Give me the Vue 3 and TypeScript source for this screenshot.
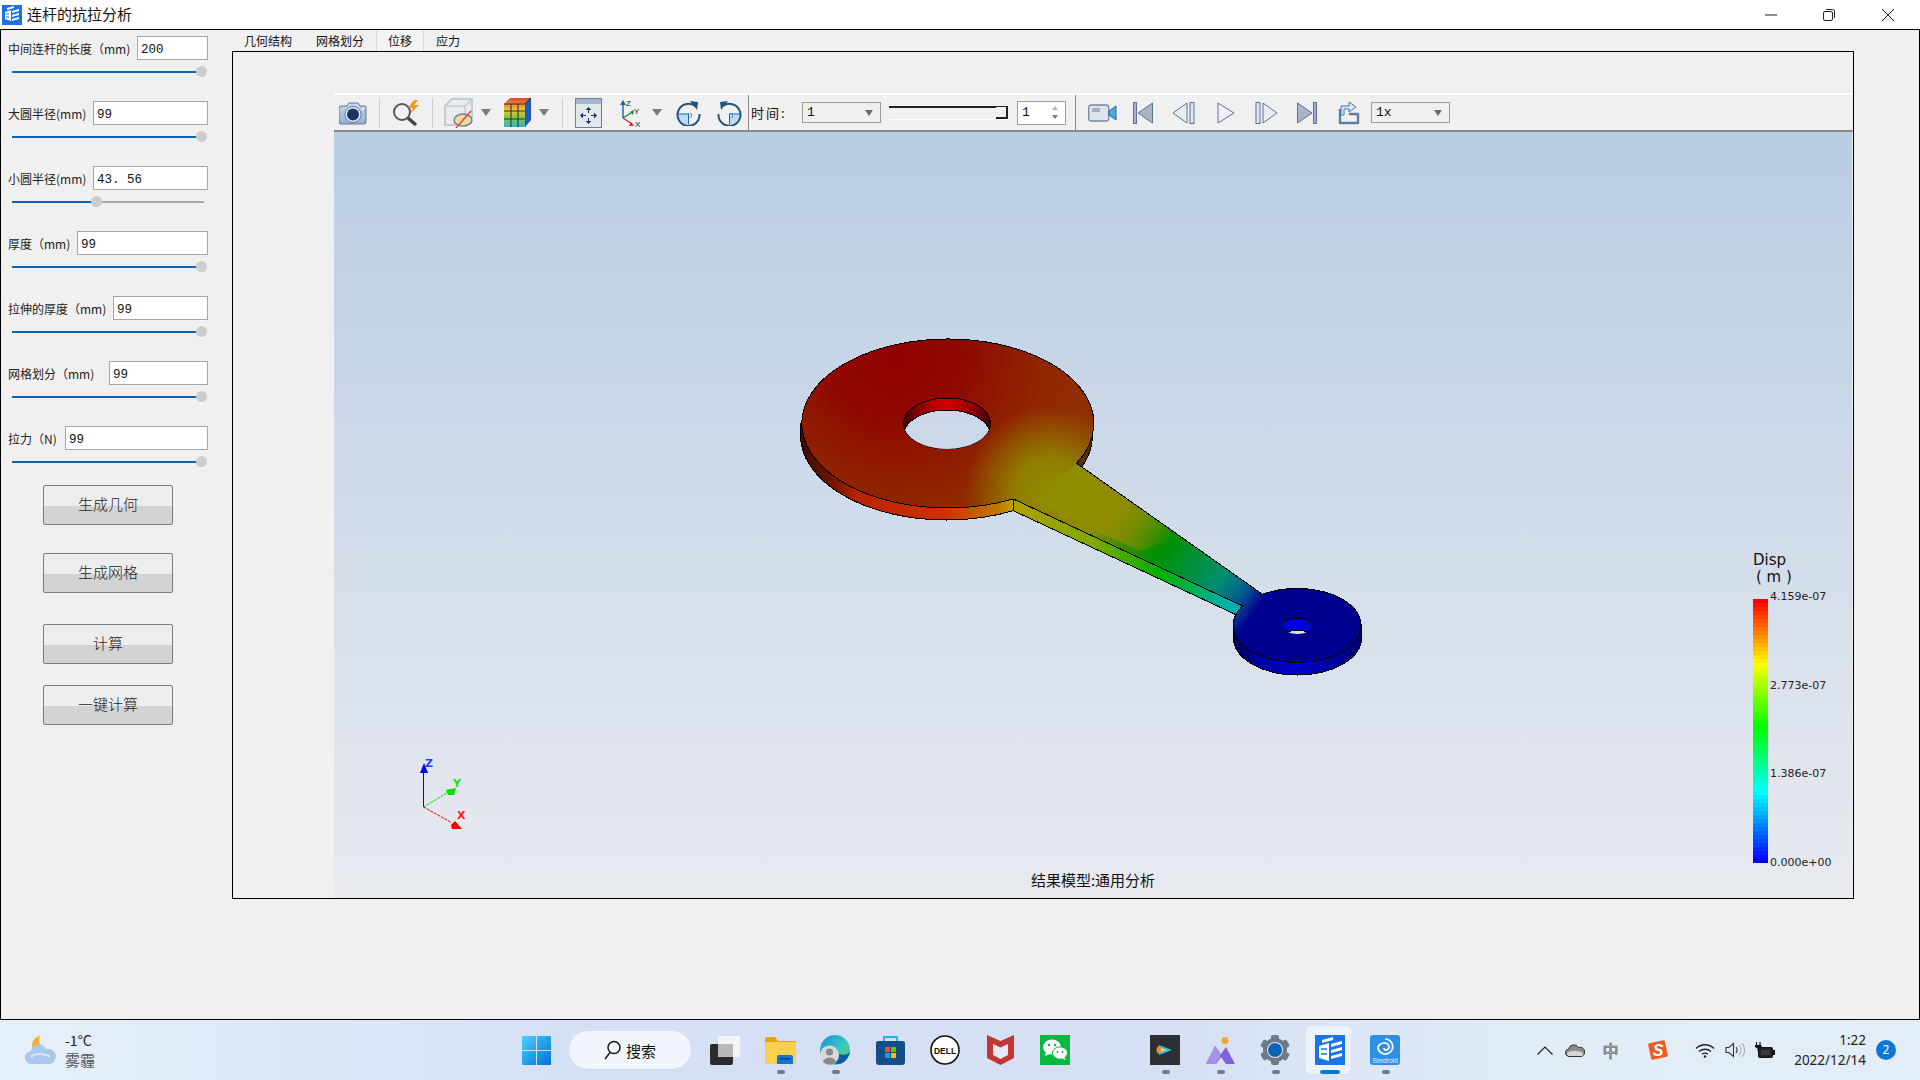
<script setup lang="ts">
interface Param {
  label: string;
  value: string;
  inputWidth: number;
  percent: number;
}

const params: Param[] = [
  { label: "中间连杆的长度（mm)", value: "200", inputWidth: 71, percent: 98.5 },
  { label: "大圆半径(mm)", value: "99", inputWidth: 115, percent: 98.5 },
  { label: "小圆半径(mm)", value: "43. 56", inputWidth: 115, percent: 44 },
  { label: "厚度（mm)", value: "99", inputWidth: 131, percent: 98.5 },
  { label: "拉伸的厚度（mm)", value: "99", inputWidth: 95, percent: 98.5 },
  { label: "网格划分（mm)", value: "99", inputWidth: 99, percent: 98.5 },
  { label: "拉力（N)", value: "99", inputWidth: 143, percent: 98.5 },
];

const buttons = [
  { text: "生成几何", top: 17 },
  { text: "生成网格", top: 28 },
  { text: "计算", top: 31 },
  { text: "一键计算", top: 21 },
];

const tabs = ["几何结构", "网格划分", "位移", "应力"];
const legendLabels = ["4.159e-07", "2.773e-07", "1.386e-07", "0.000e+00"];

// colour bar runs red -> yellow -> green -> cyan -> blue, in steps
const stops: [number, number[]][] = [
  [0, [255, 0, 0]],
  [0.242, [255, 255, 0]],
  [0.485, [0, 255, 0]],
  [0.735, [0, 255, 255]],
  [1, [0, 0, 255]],
];

function bandColor(t: number): string {
  let i = 0;
  while (i < stops.length - 2 && t > stops[i + 1][0]) i++;
  const [t0, c0] = stops[i];
  const [t1, c1] = stops[i + 1];
  const k = (t - t0) / (t1 - t0);
  const c = c0.map((v, n) => Math.round(v + (c1[n] - v) * k));
  return `rgb(${c[0]},${c[1]},${c[2]})`;
}

const bands = Array.from({ length: 66 }, (_, i) => bandColor(i / 65));
const surfacePath =
  "M1076.6 463.3L1262.4 594.3A64 37 0 1 1 1242.6 606L1013.3 499A146 84.5 0 1 1 1076.6 463.3z";
</script>

<template>
  <div class="screen">
    <header class="titlebar">
      <svg class="app-icon" width="20" height="20" viewBox="0 0 20 20">
        <rect width="20" height="20" fill="#1a73e8" />
        <path d="M3 7l6-2v11l-6-2zM10 6l7-2v2l-7 2zM10 10l7-2v2l-7 2zM10 14l7-2v2l-7 2zM5 3l7-2v2l-7 2z" fill="#fff" />
        <path d="M4 9h3M4 12h3" stroke="#1a73e8" />
      </svg>
      <span class="title">连杆的抗拉分析</span>
      <div class="win-controls">
        <svg width="14" height="14" viewBox="0 0 14 14"><path d="M1 7h12" stroke="#222" /></svg>
        <svg class="restore" width="14" height="14" viewBox="0 0 14 14" fill="none" stroke="#222">
          <rect x="1.5" y="3.5" width="9" height="9" rx="1.5" />
          <path d="M4 1.5h6.5a2 2 0 0 1 2 2V10" />
        </svg>
        <svg class="close" width="14" height="14" viewBox="0 0 14 14"><path d="M1 1l12 12M13 1L1 13" stroke="#222" /></svg>
      </div>
    </header>

    <main class="window">
      <aside class="sidebar">
        <div class="params">
          <div v-for="p in params" :key="p.label" class="param">
            <div class="param-row">
              <label>{{ p.label }}</label>
              <input type="text" readonly :value="p.value" :style="{ width: p.inputWidth + 'px' }" />
            </div>
            <div class="slider">
              <div class="slider-fill" :style="{ width: p.percent + '%' }"></div>
              <div class="slider-thumb" :style="{ left: p.percent + '%' }"></div>
            </div>
          </div>
        </div>
        <button v-for="b in buttons" :key="b.text" class="action" :style="{ marginTop: b.top + 'px' }">
          {{ b.text }}
        </button>
      </aside>

      <section class="content">
        <nav class="tabs">
          <span v-for="t in tabs" :key="t" class="tab" :class="{ active: t === '位移' }">{{ t }}</span>
        </nav>
        <div class="panel">
          <div class="toolbar">
            <svg class="i-camera" width="28" height="24" viewBox="0 0 28 24">
              <defs>
                <linearGradient id="camBody" x1="0" y1="0" x2="0" y2="1">
                  <stop offset="0" stop-color="#c6d8ec" /><stop offset="1" stop-color="#8fb0d2" />
                </linearGradient>
              </defs>
              <path d="M2 5h6l2-3h9l2 3h5a1 1 0 0 1 1 1v15a2 2 0 0 1-2 2H2a2 2 0 0 1-2-2V7a2 2 0 0 1 2-2z" fill="url(#camBody)" stroke="#64799a" />
              <circle cx="14" cy="13.5" r="8" fill="#e6edf5" stroke="#64799a" />
              <circle cx="14" cy="13.5" r="6" fill="#1c3466" />
              <circle cx="24" cy="8" r="1" fill="#fff" />
            </svg>
            <i class="sep s-a"></i>
            <svg class="i-lens" width="29" height="28" viewBox="0 0 29 28" fill="none">
              <circle cx="10" cy="13" r="8" stroke="#555" stroke-width="2" fill="#eef2f6" />
              <path d="M16 19l8 7" stroke="#444" stroke-width="3.5" />
              <path d="M22 1l-6 8h5l-3 6 9-9h-5l4-5z" fill="#f19a22" />
            </svg>
            <i class="sep s-b"></i>
            <svg class="i-cube" width="29" height="30" viewBox="0 0 29 30" fill="none">
              <path d="M1 8l7-7h20v19l-7 7H1z" fill="#e9ecef" stroke="#b8bfc9" stroke-width="1.5" />
              <path d="M1 8h20v19M21 8l7-7" stroke="#c5cbd3" stroke-width="1.5" />
              <ellipse cx="19" cy="22" rx="9" ry="6" fill="#f0d9a4" stroke="#6d7f99" stroke-width="1.5" />
              <path d="M12 30l15-17" stroke="#d9442c" stroke-width="1.3" />
            </svg>
            <svg class="drop d-a" width="10" height="7" viewBox="0 0 10 7"><path d="M0 0h10L5 7z" fill="#7c7c7c" /></svg>
            <svg class="i-grid" width="27" height="30" viewBox="0 0 27 30">
              <defs>
                <linearGradient id="gridFace" x1="0" y1="0" x2="0" y2="1">
                  <stop offset="0" stop-color="#e2462b" /><stop offset=".4" stop-color="#f2c32c" /><stop offset=".7" stop-color="#7ac943" /><stop offset="1" stop-color="#2fb5c9" />
                </linearGradient>
              </defs>
              <path d="M0 6l6-6h21v22l-6 7H0z" fill="url(#gridFace)" />
              <path d="M21 7l6-7v22l-6 7z" fill="#1d58c4" />
              <path d="M0 6h21l6-6M7 6v23M14 6v23M0 13h21M0 21h21" stroke="#2a3350" stroke-width="1.1" fill="none" />
            </svg>
            <svg class="drop d-b" width="10" height="7" viewBox="0 0 10 7"><path d="M0 0h10L5 7z" fill="#7c7c7c" /></svg>
            <i class="sep s-c"></i>
            <svg class="i-fit" width="27" height="30" viewBox="0 0 27 30">
              <rect x=".5" y=".5" width="26" height="29" fill="#e3e8ef" stroke="#6d7f99" />
              <rect x="1" y="1" width="25" height="5" fill="#a9b8cb" />
              <g fill="#1f3a5f" stroke="#1f3a5f">
                <path d="M13.5 9l3 3h-6zM13.5 26l3-3h-6zM5 17.5l3-3v6zM22 17.5l-3-3v6z" stroke="none" />
                <path d="M13.5 12v3M13.5 20v3M8 17.5h3M16 17.5h3" fill="none" />
              </g>
            </svg>
            <svg class="i-axis" width="23" height="30" viewBox="0 0 23 30">
              <path d="M4 20V6" stroke="#1761b5" stroke-width="1.4" />
              <path d="M4 2l3 5H1z" fill="#1761b5" />
              <path d="M4 20l8-5" stroke="#138a3a" stroke-width="1.4" />
              <path d="M15 12l-1 5-3-3z" fill="#138a3a" />
              <path d="M4 20l9 6" stroke="#d9232c" stroke-width="1.4" />
              <path d="M15 28l-5 0 2-4z" fill="#d9232c" />
              <text x="7" y="8" class="axis-text">Z</text>
              <text x="15" y="16" class="axis-text">Y</text>
              <text x="16" y="29" class="axis-text">X</text>
            </svg>
            <svg class="drop d-c" width="10" height="7" viewBox="0 0 10 7"><path d="M0 0h10L5 7z" fill="#7c7c7c" /></svg>
            <svg class="i-rot" width="25" height="26" viewBox="0 0 25 26" fill="none">
              <path d="M2 14h10.5v10.5A11 11 0 0 1 2 14z" fill="#b9dcf2" />
              <rect x="12.5" y="14" width="3" height="3" fill="#fff" stroke="#1c6aa8" stroke-width=".7" />
              <path d="M2 14h10.5v10.5" stroke="#1c6aa8" />
              <path d="M19 6A11 11 0 1 0 23.5 14" stroke="#23547f" stroke-width="2" />
              <path d="M14 1l8 1-1 8z" fill="#23547f" />
            </svg>
            <svg class="i-rot2" width="25" height="26" viewBox="0 0 25 26" fill="none">
              <path d="M23 14H12.5v10.5A11 11 0 0 0 23 14z" fill="#b9dcf2" />
              <rect x="12.5" y="14" width="3" height="3" fill="#fff" stroke="#1c6aa8" stroke-width=".7" />
              <path d="M23 14H12.5v10.5" stroke="#1c6aa8" />
              <path d="M6 6A11 11 0 1 1 1.5 14" stroke="#23547f" stroke-width="2" />
              <path d="M11 1L3 2l1 8z" fill="#23547f" />
            </svg>
            <i class="sep-tall st-a"></i>
            <span class="time-label">时间:</span>
            <div class="combo c-time"><span>1</span><svg width="8" height="6" viewBox="0 0 8 6"><path d="M0 0h8L4 6z" fill="#6a6a6a" /></svg></div>
            <div class="time-slider"><div class="time-handle"></div></div>
            <div class="spin">
              <span>1</span>
              <svg width="6" height="14" viewBox="0 0 6 14"><path d="M3 0l3 4H0z" fill="#b5b5b5" /><path d="M0 9h6l-3 4z" fill="#7a7a7a" /></svg>
            </div>
            <i class="sep-tall st-b"></i>
            <svg class="i-video" width="29" height="18" viewBox="0 0 29 18">
              <rect x=".7" y="1" width="20" height="16" rx="2.5" fill="#dfe4ec" stroke="#7187a8" stroke-width="1.3" />
              <rect x="4" y="4" width="8" height="4" fill="#a6b0c0" />
              <path d="M21 7l7-5v14l-7-5z" fill="#5aa5d8" stroke="#1a6aa8" />
            </svg>
            <svg class="i-first" width="20" height="22" viewBox="0 0 20 22">
              <rect x=".5" y=".5" width="3" height="21" fill="#a4b3c9" stroke="#5b7295" />
              <path d="M19.5 1v20L5 11z" fill="#a9b4c4" stroke="#5b7295" />
            </svg>
            <svg class="i-prev" width="23" height="22" viewBox="0 0 23 22">
              <path d="M15 1v20L1 11z" fill="#e8edf3" stroke="#5b7295" />
              <rect x="18" y=".5" width="4" height="21" fill="#dfe5ed" stroke="#5b7295" />
            </svg>
            <svg class="i-play" width="18" height="22" viewBox="0 0 18 22"><path d="M1 1l16 10L1 21z" fill="#edf1f6" stroke="#5b7295" /></svg>
            <svg class="i-next" width="23" height="22" viewBox="0 0 23 22">
              <rect x="1" y=".5" width="4" height="21" fill="#dfe5ed" stroke="#5b7295" />
              <path d="M8 1v20l14-10z" fill="#e8edf3" stroke="#5b7295" />
            </svg>
            <svg class="i-last" width="20" height="22" viewBox="0 0 20 22">
              <path d="M.5 1v20L15 11z" fill="#a9b4c4" stroke="#5b7295" />
              <rect x="16.5" y=".5" width="3" height="21" fill="#a4b3c9" stroke="#5b7295" />
            </svg>
            <svg class="i-export" width="23" height="24" viewBox="0 0 23 24" fill="none">
              <path d="M3 8v14h18V13h-9" stroke="#5f7da6" stroke-width="2.4" stroke-linejoin="round" />
              <path d="M12 1l7 5-7 5V8H7v6H4V5h8z" fill="#dbe7f3" stroke="#3c78b5" />
            </svg>
            <div class="combo c-speed"><span>1x</span><svg width="8" height="6" viewBox="0 0 8 6"><path d="M0 0h8L4 6z" fill="#6a6a6a" /></svg></div>
          </div>

          <div class="viewport">
            <svg class="scene" viewBox="334 132 1518 766">
              <defs>
                <linearGradient id="bg" gradientUnits="userSpaceOnUse" x1="0" y1="132" x2="0" y2="898">
                  <stop offset="0" stop-color="#b9cde4" /><stop offset="1" stop-color="#e8eaef" />
                </linearGradient>
                <radialGradient id="surface" gradientUnits="userSpaceOnUse" cx="895" cy="355" r="500">
                  <stop offset="0" stop-color="#8f0000" />
                  <stop offset=".14" stop-color="#8f0a00" />
                  <stop offset=".3" stop-color="#902800" />
                  <stop offset=".44" stop-color="#903200" />
                  <stop offset=".5" stop-color="#908c00" />
                  <stop offset=".66" stop-color="#009000" />
                  <stop offset=".79" stop-color="#009070" />
                  <stop offset=".84" stop-color="#006090" />
                  <stop offset=".885" stop-color="#000090" />
                </radialGradient>
                <radialGradient id="armBlob" gradientUnits="userSpaceOnUse" cx="1050" cy="492" r="85">
                  <stop offset="0" stop-color="#908c00" />
                  <stop offset=".4" stop-color="#908c00" stop-opacity=".85" />
                  <stop offset="1" stop-color="#908c00" stop-opacity="0" />
                </radialGradient>
                <linearGradient id="armStart" gradientUnits="userSpaceOnUse" x1="1060" y1="480" x2="1170" y2="550">
                  <stop offset="0" stop-color="#908c00" />
                  <stop offset=".5" stop-color="#908c00" />
                  <stop offset="1" stop-color="#908c00" stop-opacity="0" />
                </linearGradient>
                <linearGradient id="bigSide" gradientUnits="userSpaceOnUse" x1="800" y1="0" x2="1092" y2="0">
                  <stop offset="0" stop-color="#3a0c00" />
                  <stop offset=".1" stop-color="#6a1400" />
                  <stop offset=".2" stop-color="#b82400" />
                  <stop offset=".5" stop-color="#d03200" />
                  <stop offset=".68" stop-color="#c07800" />
                  <stop offset=".73" stop-color="#c0a000" />
                  <stop offset=".8" stop-color="#5a3000" />
                  <stop offset="1" stop-color="#5a3000" />
                </linearGradient>
                <linearGradient id="armSide" gradientUnits="userSpaceOnUse" x1="1013" y1="0" x2="1240" y2="0">
                  <stop offset="0" stop-color="#b0a000" />
                  <stop offset=".35" stop-color="#80a800" />
                  <stop offset=".65" stop-color="#00b000" />
                  <stop offset=".95" stop-color="#00b0b0" />
                </linearGradient>
                <linearGradient id="smallSide" gradientUnits="userSpaceOnUse" x1="1233" y1="0" x2="1362" y2="0">
                  <stop offset="0" stop-color="#000050" />
                  <stop offset=".2" stop-color="#0000a0" />
                  <stop offset=".5" stop-color="#0000d0" />
                  <stop offset="1" stop-color="#000070" />
                </linearGradient>
                <linearGradient id="holeWall" gradientUnits="userSpaceOnUse" x1="903" y1="0" x2="991" y2="0">
                  <stop offset="0" stop-color="#3c0000" />
                  <stop offset=".2" stop-color="#900000" />
                  <stop offset=".5" stop-color="#d40000" />
                  <stop offset=".8" stop-color="#900000" />
                  <stop offset="1" stop-color="#3c0000" />
                </linearGradient>
                <clipPath id="bigHoleClip"><ellipse cx="947" cy="423.5" rx="43.5" ry="25.5" /></clipPath>
                <clipPath id="smallHoleClip"><ellipse cx="1297.5" cy="626" rx="14.5" ry="8" /></clipPath>
              </defs>

              <g stroke="#000" stroke-width="1" shape-rendering="crispEdges">
                <path d="M800.5 423.5v12a146 84.5 0 0 0 292 0v-12z" fill="url(#bigSide)" />
                <path d="M1233.5 626v12a64 37 0 0 0 128 0v-12z" fill="url(#smallSide)" />
                <path d="M1013.3 499v11.7L1236.7 615l6-9z" fill="url(#armSide)" />
                <path :d="surfacePath" fill="url(#surface)" />
                <path :d="surfacePath" fill="url(#armBlob)" stroke="none" shape-rendering="auto" />
                <path d="M1030 500L1076.6 463.300L1180 536L1140 551z" fill="url(#armStart)" stroke="none" shape-rendering="auto" />
                <path :d="surfacePath" fill="none" />
                <ellipse cx="947" cy="423.5" rx="43.5" ry="25.5" fill="url(#holeWall)" />
                <ellipse cx="1297.5" cy="626" rx="14.5" ry="8" fill="#0000d4" />
                <g clip-path="url(#bigHoleClip)"><ellipse cx="947" cy="435.5" rx="43.5" ry="25.5" fill="url(#bg)" /></g>
                <g clip-path="url(#smallHoleClip)"><ellipse cx="1297.5" cy="638" rx="14.5" ry="8" fill="url(#bg)" /></g>
              </g>

              <g class="triad">
                <path d="M423.5 807V770" stroke="#0000ff" />
                <path d="M424 763l4 10h-8z" fill="#0000ff" />
                <text x="425" y="767" fill="#2a3cff">Z</text>
                <path d="M423.5 807l25-15" stroke="#00e000" stroke-dasharray="3 1" />
                <path d="M456 788l-2 7-6 0-2-5z" fill="#00e000" />
                <text x="453" y="787" fill="#12e012">Y</text>
                <path d="M423.5 807l27 15" stroke="#f00000" stroke-dasharray="3 1" />
                <path d="M462 829h-10l-1-4 4-4z" fill="#f00000" />
                <text x="457" y="819" fill="#ff2020">X</text>
              </g>
            </svg>

            <div class="legend">
              <div class="legend-title">Disp</div>
              <div class="legend-unit">( m )</div>
              <div class="legend-body">
                <div class="legend-bar">
                  <div v-for="(c, i) in bands" :key="i" class="band" :style="{ background: c }"></div>
                </div>
                <div class="legend-labels">
                  <span v-for="l in legendLabels" :key="l">{{ l }}</span>
                </div>
              </div>
            </div>
            <div class="result-name">结果模型:通用分析</div>
          </div>
        </div>
      </section>
    </main>

    <footer class="taskbar">
      <div class="weather">
        <svg width="32" height="30" viewBox="0 0 32 30">
          <path d="M15 1a9 9 0 0 0-7 13 9 9 0 0 0 10-1 10 10 0 0 1-3-12z" fill="#f5b335" />
          <path d="M7 29a6.5 6.5 0 0 1-1-13 8 8 0 0 1 15-2 7.5 7.5 0 0 1 4 15z" fill="#a9c8ec" />
          <path d="M6 22c4-4 14-4 19 0" stroke="#d8e8f8" stroke-width="2" fill="none" />
        </svg>
        <div class="weather-text">
          <span>-1°C</span>
          <span class="weather-sub">雾霾</span>
        </div>
      </div>

      <div class="center">
        <svg class="start" width="29" height="29" viewBox="0 0 29 29">
          <defs>
            <linearGradient id="winBlue" x1="0" y1="0" x2="1" y2="1">
              <stop offset="0" stop-color="#4ad0fb" /><stop offset="1" stop-color="#0270d4" />
            </linearGradient>
          </defs>
          <path d="M0 1a1 1 0 0 1 1-1h13v14H0zM15 0h13a1 1 0 0 1 1 1v13H15zM0 15h14v14H1a1 1 0 0 1-1-1zM15 15h14v13a1 1 0 0 1-1 1H15z" fill="url(#winBlue)" />
        </svg>
        <div class="search">
          <svg width="17" height="20" viewBox="0 0 17 20" fill="none" stroke="#1a1a1a" stroke-width="1.5">
            <circle cx="10" cy="7.5" r="6" />
            <path d="M6 12.5L1 19" />
          </svg>
          <span>搜索</span>
        </div>

        <div class="slot">
          <svg width="30" height="29" viewBox="0 0 30 29">
            <rect x="0" y="8" width="23" height="21" rx="2" fill="#2b2b2b" />
            <rect x="8" y="0" width="22" height="21" rx="1" fill="#f4f4f4" />
            <rect x="8" y="8" width="15" height="13" fill="#b9b9b9" />
          </svg>
        </div>
        <div class="slot has-dot">
          <svg width="31" height="27" viewBox="0 0 31 27">
            <path d="M0 2a2 2 0 0 1 2-2h8l3 4h18v4H0z" fill="#e2a30c" />
            <rect y="5" width="31" height="22" rx="1" fill="#fbd04c" />
            <path d="M12 20a2 2 0 0 1 2-2h12a2 2 0 0 1 2 2v7H12z" fill="#1078d4" />
            <rect x="15" y="21" width="10" height="1.5" fill="#083e74" />
          </svg>
        </div>
        <div class="slot has-dot">
          <svg width="30" height="30" viewBox="0 0 30 30">
            <defs>
              <linearGradient id="edgeGrad" x1="0" y1="0" x2="1" y2="1">
                <stop offset="0" stop-color="#1d8fd8" /><stop offset=".5" stop-color="#31c5c5" /><stop offset="1" stop-color="#6bd948" />
              </linearGradient>
            </defs>
            <circle cx="15" cy="15" r="15" fill="url(#edgeGrad)" />
            <path d="M30 15c0 4-6 6-11 4-3-1-4-4-2-6H8c-2 6 1 14 9 16 7 1 13-7 13-14z" fill="#0c59a4" />
            <circle cx="9.5" cy="20" r="9.5" fill="#d9d9d9" />
            <circle cx="9.5" cy="17" r="3.6" fill="#8a8a8a" />
            <path d="M3 27c1-6 12-6 13 0a9 9 0 0 1-13 0z" fill="#8a8a8a" />
          </svg>
        </div>
        <div class="slot">
          <svg width="29" height="30" viewBox="0 0 29 30">
            <path d="M8 7V2h13v5" fill="none" stroke="#28b3e8" stroke-width="2" />
            <path d="M2 6h25a2 2 0 0 1 2 2v19a3 3 0 0 1-3 3H3a3 3 0 0 1-3-3V8a2 2 0 0 1 2-2z" fill="#124f88" />
            <rect x="9" y="12" width="5" height="5" fill="#f25022" />
            <rect x="15" y="12" width="5" height="5" fill="#7fba00" />
            <rect x="9" y="18" width="5" height="5" fill="#00a4ef" />
            <rect x="15" y="18" width="5" height="5" fill="#ffb900" />
          </svg>
        </div>
        <div class="slot">
          <svg width="30" height="30" viewBox="0 0 30 30">
            <circle cx="15" cy="15" r="14" fill="#fff" stroke="#111" stroke-width="1.6" />
            <text x="15" y="18.5" class="dell">DELL</text>
          </svg>
        </div>
        <div class="slot">
          <svg width="27" height="30" viewBox="0 0 27 30">
            <path d="M0 0l13.5 6L27 0v23L13.5 30 0 23z" fill="#c13732" />
            <path d="M6 9l7.5 3.5L21 9v11l-7.5 4L6 20z" fill="#e3e9f7" />
          </svg>
        </div>
        <div class="slot">
          <svg width="30" height="30" viewBox="0 0 30 30">
            <rect width="30" height="30" fill="#09b83e" />
            <ellipse cx="12" cy="12" rx="9" ry="7.5" fill="#fff" />
            <path d="M6 17l-1 4 5-2z" fill="#fff" />
            <ellipse cx="20" cy="18" rx="7.5" ry="6.2" fill="#fff" stroke="#09b83e" />
            <path d="M24 22l2 3-4-1.5z" fill="#fff" />
            <circle cx="9" cy="10" r="1.2" fill="#09b83e" /><circle cx="15" cy="10" r="1.2" fill="#09b83e" />
            <circle cx="17.5" cy="17" r="1" fill="#09b83e" /><circle cx="22.5" cy="17" r="1" fill="#09b83e" />
          </svg>
        </div>
        <div class="slot"></div>
        <div class="slot has-dot">
          <svg width="30" height="30" viewBox="0 0 30 30">
            <rect width="30" height="30" fill="#2c3035" />
            <path d="M9 10l13 5-13 5z" fill="#34b9e8" />
            <path d="M8 11c-2 3-2 5 0 8l5-4z" fill="#f08a24" />
            <path d="M11 13l6 2-6 2z" fill="#d8e25a" />
          </svg>
        </div>
        <div class="slot has-dot">
          <svg width="29" height="27" viewBox="0 0 29 27">
            <path d="M0 27L9 9l6 8 5-7 9 17H20l-5-7-5 7z" fill="#7c63d9" />
            <path d="M9 9l6 8-5 10H0z" fill="#a891ee" />
            <circle cx="19" cy="3.5" r="3.5" fill="#f7a823" />
          </svg>
        </div>
        <div class="slot has-dot">
          <svg width="30" height="30" viewBox="0 0 30 30">
            <g fill="#6e7a85">
              <rect x="11" y="0" width="8" height="30" rx="2" />
              <rect x="11" y="0" width="8" height="30" rx="2" transform="rotate(60 15 15)" />
              <rect x="11" y="0" width="8" height="30" rx="2" transform="rotate(120 15 15)" />
              <circle cx="15" cy="15" r="12" />
            </g>
            <circle cx="15" cy="15" r="8" fill="#e5ecf5" />
            <circle cx="15" cy="15" r="7" fill="#0e62b3" />
          </svg>
        </div>
        <div class="slot active">
          <i class="active-bg"></i>
          <svg width="30" height="30" viewBox="0 0 30 30">
            <rect width="30" height="30" fill="#1a73e8" />
            <path d="M4 11l10-3v18l-10-3zM16 9l11-3v3l-11 3zM16 15l11-3v3l-11 3zM16 21l11-3v3l-11 3zM7 5l11-3v3L7 8z" fill="#fff" />
            <path d="M6 14h6M6 19h6" stroke="#1a73e8" stroke-width="1.6" />
          </svg>
          <i class="active-line"></i>
        </div>
        <div class="slot has-dot">
          <svg width="30" height="30" viewBox="0 0 30 30">
            <rect width="30" height="30" rx="3" fill="#2f8fe6" />
            <path d="M15 4a7.5 7.5 0 1 1-7 9.5c0-3.500 3-5.500 6-5.500s5 2 5 4-2 3-3 3-2-1-2-2" fill="none" stroke="#fff" stroke-width="1.7" />
            <text x="15" y="27.5" class="simdroid">Simdroid</text>
          </svg>
        </div>
      </div>

      <div class="tray">
        <svg class="t-chevron" width="16" height="9" viewBox="0 0 16 9"><path d="M.5 8.5L8 1l7.5 7.5" fill="none" stroke="#222" stroke-width="1.2" /></svg>
        <svg class="t-cloud" width="20" height="14" viewBox="0 0 20 14">
          <path d="M4 13.5a3.8 3.8 0 0 1-.5-7.5 5.5 5.5 0 0 1 10-1.500 4.500 4.500 0 0 1 3 9z" fill="#8a8a8a" stroke="#333" />
          <path d="M2 10c4-3 11-3 16 0v2l-1 1H3z" fill="#d6d6d6" />
        </svg>
        <span class="t-ime">中</span>
        <svg class="t-sogou" width="20" height="20" viewBox="0 0 20 20">
          <rect x="1.5" y="1.5" width="17" height="17" rx="1.5" fill="#f15a24" transform="rotate(-12 10 10)" />
          <text x="10" y="15.5" class="sogou">S</text>
        </svg>
        <svg class="t-wifi" width="20" height="15" viewBox="0 0 20 15" fill="none" stroke="#222" stroke-width="1.3">
          <path d="M1 5.5c5-5 13-5 18 0M4 8.5c3.500-3 8.500-3 12 0M7 11.200c2-1.500 4-1.500 6 0" />
          <circle cx="10" cy="13.5" r="1.2" fill="#222" stroke="none" />
        </svg>
        <svg class="t-sound" width="20" height="16" viewBox="0 0 20 16" fill="none">
          <path d="M1 5.5h3L8.5 1.5v13L4 10.5H1z" stroke="#333" stroke-width="1.1" />
          <path d="M11 5c1.500 2 1.500 4 0 6" stroke="#333" stroke-width="1.1" />
          <path d="M14 3c2.500 3 2.500 7 0 10M17 1c3.500 4 3.500 10 0 14" stroke="#aab0b8" stroke-width="1.1" />
        </svg>
        <svg class="t-battery" width="20" height="16" viewBox="0 0 20 16">
          <rect x="3.5" y="5.5" width="14" height="10" rx="1" fill="#222" stroke="#111" />
          <rect x="6" y="8" width="9" height="5" fill="#3a3a3a" />
          <rect x="18" y="8" width="2" height="5" fill="#111" />
          <path d="M1.5 0v3M5 0v3" stroke="#111" stroke-width="1.2" />
          <path d="M0 3h6.500v2L3.500 7v2H2.500V6.500L0 5z" fill="#111" />
        </svg>
        <div class="clock">
          <span>1:22</span>
          <span>2022/12/14</span>
        </div>
        <div class="badge">2</div>
      </div>
    </footer>
  </div>
</template>

<style scoped>
.screen {
  width: 1920px;
  height: 1080px;
  display: flex;
  flex-direction: column;
  overflow: hidden;
  background: #fff;
  color: #111;
  font-family: "Noto Sans CJK SC", "Liberation Sans", sans-serif;
}

.titlebar {
  height: 29px;
  display: flex;
  align-items: center;
  background: #fff;
  flex: none;
}
.app-icon {
  margin-left: 2px;
}
.title {
  margin: 0 0 2px 5px;
  font-size: 15px;
  color: #111;
}
.win-controls {
  margin-left: auto;
  display: flex;
  align-items: center;
  padding-right: 25px;
}
.win-controls svg:first-child {
  margin-right: 44px;
}
.win-controls .restore {
  margin-right: 45px;
}

.window {
  height: 991px;
  flex: none;
  box-sizing: border-box;
  border: 1px solid #000;
  background: #f0f0f0;
  display: flex;
}

.sidebar {
  width: 231px;
  flex: none;
  box-sizing: border-box;
  padding: 6px 0 0 7px;
  display: flex;
  flex-direction: column;
}
.params {
  display: flex;
  flex-direction: column;
  gap: 23px;
}
.param {
  width: 200px;
}
.param-row {
  display: flex;
  align-items: center;
  justify-content: space-between;
  height: 24px;
}
.param-row label {
  font-size: 12px;
  color: #222;
  white-space: nowrap;
}
.param-row input {
  box-sizing: border-box;
  height: 24px;
  border: 1px solid #a6a6a6;
  background: #fff;
  padding: 3px 3px 0;
  margin: 0;
  outline: none;
  border-radius: 0;
  font-family: "Liberation Mono", monospace;
  font-size: 12.5px;
  color: #111;
}
.slider {
  position: relative;
  margin: 6px 0 0 4px;
  width: 192px;
  height: 12px;
}
.slider::before {
  content: "";
  position: absolute;
  left: 0;
  right: 0;
  top: 5px;
  height: 2px;
  background: #aaa;
}
.slider-fill {
  position: absolute;
  left: 0;
  top: 5px;
  height: 2px;
  background: #0f64b8;
}
.slider-thumb {
  position: absolute;
  top: 0;
  width: 11px;
  height: 11px;
  margin-left: -5.5px;
  border-radius: 50%;
  background: #cdcdcd;
}

.action {
  width: 130px;
  height: 40px;
  margin-left: 35px;
  flex: none;
  box-sizing: border-box;
  border: 1px solid #7c7c7c;
  border-radius: 2px;
  padding: 0 0 3px;
  background: linear-gradient(#ededed 0, #ededed 52%, #d3d3d3 52%, #d3d3d3 100%);
  font-family: "Noto Sans CJK SC", sans-serif;
  font-size: 15px;
  font-weight: 300;
  color: #222;
}

.content {
  flex: 1;
  display: flex;
  flex-direction: column;
  min-width: 0;
}
.tabs {
  height: 21px;
  display: flex;
  align-items: stretch;
  flex: none;
}
.tab {
  padding: 0 12px;
  font-size: 12px;
  line-height: 21px;
  color: #111;
}
.tab.active {
  background: #f3f3f3;
  box-shadow: inset 1px 0 #d8d8d8, inset -1px 0 #d8d8d8;
}
.panel {
  width: 1622px;
  height: 848px;
  box-sizing: border-box;
  border: 1px solid #000;
  padding: 41px 0 0 101px;
  display: flex;
  flex-direction: column;
}

.toolbar {
  height: 39px;
  box-sizing: border-box;
  flex: none;
  border-top: 2px solid #fff;
  border-bottom: 2px solid #8a8a8a;
  display: flex;
  align-items: center;
  background: #f0f0f0;
  font-size: 13px;
}
.toolbar > * {
  flex: none;
}
.sep {
  width: 1px;
  height: 30px;
  background: #cfcfcf;
}
.sep-tall {
  width: 1px;
  height: 35px;
  background: #8d8d8d;
}
.i-camera { margin-left: 5px; }
.s-a { margin-left: 12px; }
.i-lens { margin-left: 12px; }
.s-b { margin-left: 11px; }
.i-cube { margin-left: 11px; }
.d-a { margin-left: 8px; }
.i-grid { margin-left: 13px; }
.d-b { margin-left: 8px; }
.s-c { margin-left: 13px; }
.i-fit { margin-left: 12px; }
.i-axis { margin-left: 17px; }
.d-c { margin-left: 10px; }
.i-rot { margin-left: 14px; }
.i-rot2 { margin-left: 16px; }
.st-a { margin-left: 6px; }
.time-label {
  margin-left: 2px;
  width: 36px;
  font-size: 13px;
  letter-spacing: 2px;
  white-space: nowrap;
}
.c-time { margin-left: 15px; }
.st-b { margin-left: 9px; }
.i-video { margin-left: 12px; }
.i-first { margin-left: 16px; }
.i-prev { margin-left: 19px; }
.i-play { margin-left: 22px; }
.i-next { margin-left: 20px; }
.i-last { margin-left: 19px; }
.i-export { margin-left: 20px; }
.c-speed { margin-left: 11px; }
.axis-text {
  font-family: "Liberation Sans", sans-serif;
  font-size: 8px;
  fill: #222;
}

.combo {
  width: 79px;
  height: 21px;
  box-sizing: border-box;
  border: 1px solid #9e9e9e;
  display: flex;
  align-items: center;
  justify-content: space-between;
  padding: 0 7px 0 4px;
  font-family: "Liberation Mono", monospace;
  font-size: 13px;
}
.time-slider {
  position: relative;
  width: 119px;
  height: 13px;
  margin-left: 8px;
  border-top: 2px solid #222;
  box-sizing: border-box;
  box-shadow: 0 1px #fff;
}
.time-handle {
  position: absolute;
  right: 0;
  top: -1px;
  width: 12px;
  height: 12px;
  box-sizing: border-box;
  border-right: 2px solid #222;
  border-bottom: 2px solid #222;
  background: #f0f0f0;
}
.spin {
  width: 49px;
  height: 24px;
  box-sizing: border-box;
  margin-left: 9px;
  border: 1px solid #9e9e9e;
  background: #fff;
  display: flex;
  align-items: center;
  justify-content: space-between;
  padding: 0 7px 0 4px;
  font-family: "Liberation Mono", monospace;
  font-size: 13px;
}

.viewport {
  position: relative;
  width: 1518px;
  height: 766px;
  flex: none;
  background: linear-gradient(#b9cde4, #e8eaef);
}
.scene {
  position: absolute;
  inset: 0;
  width: 100%;
  height: 100%;
}
.triad text {
  font-family: "DejaVu Sans", sans-serif;
  font-size: 11px;
  font-weight: 700;
}
.legend {
  position: absolute;
  left: 1419px;
  top: 419px;
  font-family: "DejaVu Sans", sans-serif;
  color: #111;
}
.legend-title {
  font-size: 15px;
  line-height: 18px;
}
.legend-unit {
  font-size: 15px;
  line-height: 17px;
  padding-left: 3px;
}
.legend-body {
  display: flex;
  align-items: center;
  gap: 2px;
  margin-top: 6px;
}
.legend-bar {
  width: 15px;
  height: 264px;
  display: flex;
  flex-direction: column;
}
.band {
  flex: 1;
}
.legend-labels {
  height: 280px;
  margin-top: -2px;
  display: flex;
  flex-direction: column;
  justify-content: space-between;
  font-size: 11px;
  line-height: 14px;
  color: #222;
}
.result-name {
  position: absolute;
  left: 0;
  right: 0;
  bottom: 8px;
  text-align: center;
  font-size: 15px;
  color: #111;
}

.taskbar {
  flex: 1;
  position: relative;
  display: flex;
  align-items: center;
  background: linear-gradient(90deg, #e6f0f9 0, #d5e0f6 30%, #d6dff3 60%, #e2ecf7 80%, #e3edf7 100%);
}
.weather {
  position: absolute;
  left: 25px;
  top: 10px;
  display: flex;
  gap: 8px;
  align-items: center;
}
.weather-text {
  display: flex;
  flex-direction: column;
  font-size: 14px;
  line-height: 20px;
  color: #222;
}
.weather-sub {
  font-size: 15px;
  color: #555;
}
.center {
  display: flex;
  align-items: center;
  margin-left: 522px;
  height: 60px;
}
.start {
  flex: none;
}
.search {
  width: 122px;
  height: 38px;
  margin-left: 18px;
  border-radius: 19px;
  background: #f1f5fd;
  display: flex;
  align-items: center;
  justify-content: center;
  gap: 5px;
  font-size: 15px;
  flex: none;
  box-shadow: 0 1px 1px #d0d7e6;
}
.slot {
  position: relative;
  width: 55px;
  height: 60px;
  flex: none;
  display: flex;
  align-items: center;
  justify-content: center;
}
.search + .slot {
  margin-left: 6.5px;
}
.slot > svg {
  position: relative;
}
.has-dot::after {
  content: "";
  position: absolute;
  left: 24px;
  bottom: 6px;
  width: 8px;
  height: 4px;
  border-radius: 2px;
  background: #6f7a8c;
}
.active-bg {
  position: absolute;
  left: 3.5px;
  top: 6px;
  width: 44px;
  height: 48px;
  border-radius: 5px;
  background: #eef3fb;
  box-shadow: 4px 0 0 -1px #e3eaf7;
}
.active-line {
  position: absolute;
  left: 17.5px;
  bottom: 6px;
  width: 20px;
  height: 4px;
  border-radius: 2px;
  background: #0a78d4;
}
.tray {
  position: absolute;
  left: 1537px;
  top: 0;
  height: 60px;
  display: flex;
  align-items: center;
}
.t-cloud { margin-left: 12px; }
.t-ime {
  width: 21px;
  margin-left: 15px;
  font-size: 16px;
  line-height: 22px;
  text-align: center;
  color: #fff;
  -webkit-text-stroke: 0.7px #444;
}
.t-sogou { margin-left: 27px; }
.t-wifi { margin-left: 27px; }
.t-sound { margin-left: 10px; }
.t-battery { margin-left: 10px; }
.sogou {
  font-family: "Liberation Sans", sans-serif;
  font-size: 16px;
  font-weight: 700;
  font-style: italic;
  text-anchor: middle;
  fill: #fff;
}
.dell {
  font-family: "Liberation Sans", sans-serif;
  font-size: 8.5px;
  font-weight: 700;
  text-anchor: middle;
  fill: #111;
}
.simdroid {
  font-family: "Liberation Sans", sans-serif;
  font-size: 6.5px;
  text-anchor: middle;
  fill: #e8f3ff;
}
.clock {
  width: 91px;
  display: flex;
  flex-direction: column;
  align-items: flex-end;
  font-family: "Noto Sans", "Liberation Sans", sans-serif;
  font-size: 13.5px;
  line-height: 20px;
  color: #222;
}
.badge {
  width: 20px;
  height: 20px;
  margin-left: 10px;
  border-radius: 50%;
  background: #0b79d3;
  color: #fff;
  font-family: "Noto Sans", sans-serif;
  font-size: 12px;
  line-height: 20px;
  text-align: center;
}
</style>

<style>
html,
body {
  margin: 0;
  overflow: hidden;
}
</style>
